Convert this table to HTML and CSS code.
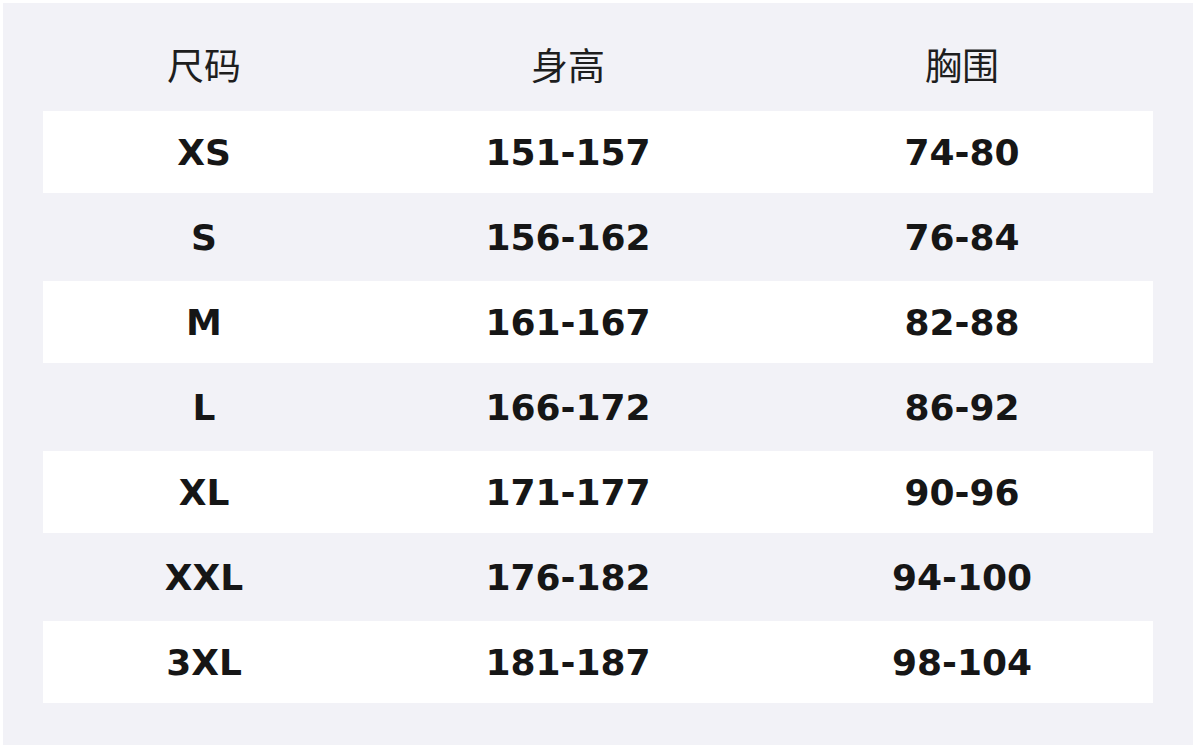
FILE: index.html
```html
<!DOCTYPE html>
<html lang="zh">
<head>
<meta charset="utf-8">
<title>尺码表</title>
<link rel="stylesheet" href="styles.css">
</head>
<body>
<div class="frame">
  <div class="table">
    <div class="row head">
      <div class="cell">尺码</div>
      <div class="cell">身高</div>
      <div class="cell">胸围</div>
    </div>
    <div class="row odd"><div class="cell">XS</div><div class="cell">151-157</div><div class="cell">74-80</div></div>
    <div class="row"><div class="cell">S</div><div class="cell">156-162</div><div class="cell">76-84</div></div>
    <div class="row odd"><div class="cell">M</div><div class="cell">161-167</div><div class="cell">82-88</div></div>
    <div class="row"><div class="cell">L</div><div class="cell">166-172</div><div class="cell">86-92</div></div>
    <div class="row odd"><div class="cell">XL</div><div class="cell">171-177</div><div class="cell">90-96</div></div>
    <div class="row"><div class="cell">XXL</div><div class="cell">176-182</div><div class="cell">94-100</div></div>
    <div class="row odd"><div class="cell">3XL</div><div class="cell">181-187</div><div class="cell">98-104</div></div>
  </div>
</div>
</body>
</html>
```
FILE: styles.css
```css
html, body {
  margin: 0;
  padding: 0;
  background: #ffffff;
}
.frame {
  margin: 3px;
  width: 1190px;
  height: 742px;
  box-sizing: border-box;
  background: #f2f2f7;
  padding: 0 40px 40px;
}
.table {
  display: flex;
  flex-direction: column;
}
.row {
  display: grid;
  grid-template-columns: 322px 406px 382px;
  height: 85px;
  box-sizing: border-box;
  padding: 1px 0 2px;
  background-clip: content-box;
}
.row.odd {
  background-color: #ffffff;
}
.cell {
  display: flex;
  align-items: center;
  justify-content: center;
  font-family: "DejaVu Sans", sans-serif;
  font-weight: bold;
  font-size: 36px;
  color: #161616;
}
.row.head {
  height: 107px;
  padding: 14px 0 0;
}
.row.head .cell {
  font-family: "Noto Sans CJK SC", sans-serif;
  font-weight: normal;
  font-size: 37px;
  color: #1e1e1e;
}
```
